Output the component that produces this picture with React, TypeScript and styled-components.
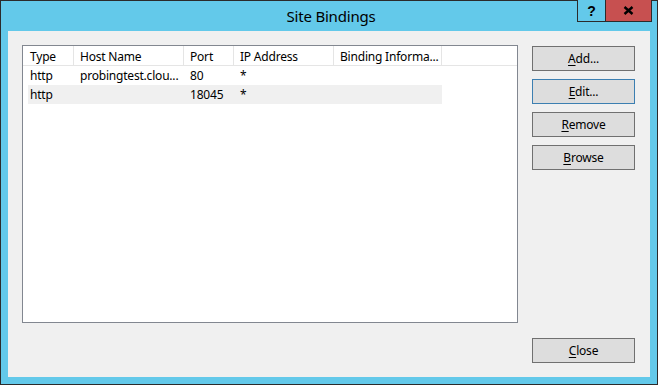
import React from "react";
import styled, { createGlobalStyle } from "styled-components";

const GlobalStyle = createGlobalStyle`
  html, body {
    margin: 0;
    padding: 0;
    background: #ffffff;
  }
  body {
    font-family: "Noto Sans", "Open Sans", sans-serif;
    font-size: 12px;
    letter-spacing: -0.2px;
    color: #000;
  }
`;

const Window = styled.div`
  width: 658px;
  height: 385px;
  box-sizing: border-box;
  border: 1px solid #2b2b2b;
  background: #63c9ea;
  display: flex;
  flex-direction: column;
  padding: 0 7px 7px 7px;
`;

const TitleBar = styled.div`
  height: 30px;
  display: grid;
  grid-template-columns: 1fr auto 1fr;
  align-items: start;
  margin: 0 -2px 0 0;
`;

const Title = styled.div`
  grid-column: 2;
  font-size: 15px;
  line-height: 30px;
  color: #000;
  margin-left: 2px;
`;

const CaptionButtons = styled.div`
  grid-column: 3;
  justify-self: end;
  display: flex;
  margin-top: -1px;
`;

const CaptionButton = styled.div<{ $close?: boolean }>`
  width: ${({ $close }) => ($close ? "47px" : "28px")};
  height: 22px;
  box-sizing: border-box;
  border: 1px solid #2b2b2b;
  border-top: none;
  border-right: ${({ $close }) => ($close ? "1px solid #2b2b2b" : "none")};
  background: ${({ $close }) => ($close ? "#c75050" : "#63c9ea")};
  display: flex;
  align-items: center;
  justify-content: center;
  font-family: "Liberation Sans", Arial, sans-serif;
  font-weight: bold;
  font-size: 14px;
  color: #000;
`;

const Client = styled.div`
  flex: 1;
  background: #f0f0f0;
  display: grid;
  grid-template-columns: 496px 103px;
  column-gap: 14px;
  padding: 14px 15px 14px 14px;
  box-sizing: border-box;
`;

const ListView = styled.div`
  height: 278px;
  box-sizing: border-box;
  border: 1px solid #828790;
  background: #ffffff;
  display: flex;
  flex-direction: column;
`;

const Header = styled.div`
  display: flex;
  height: 20px;
  box-sizing: border-box;
  border-bottom: 1px solid #e5e5e5;
`;

const HeaderCell = styled.div<{ $w: number; $pad?: number }>`
  width: ${({ $w }) => $w}px;
  box-sizing: border-box;
  border-right: 1px solid #e5e5e5;
  padding: 1px 0 0 ${({ $pad }) => $pad ?? 6}px;
  line-height: 19px;
  white-space: nowrap;
  overflow: hidden;
`;

const Row = styled.div<{ $shaded?: boolean }>`
  display: flex;
  height: 19px;
  margin-left: 5px;
  width: 414px;
  background: ${({ $shaded }) => ($shaded ? "#f0f0f0" : "transparent")};
`;

const Cell = styled.div<{ $w: number; $pad?: number }>`
  width: ${({ $w }) => $w}px;
  box-sizing: border-box;
  padding-left: ${({ $pad }) => $pad ?? 6}px;
  line-height: 20px;
  white-space: nowrap;
  overflow: hidden;
`;

const ButtonColumn = styled.div`
  display: flex;
  flex-direction: column;
  gap: 8px;
  padding-top: 1px;
`;

const Spacer = styled.div`
  flex: 1;
`;

const Button = styled.div<{ $focused?: boolean }>`
  height: 25px;
  box-sizing: border-box;
  border: 1px solid ${({ $focused }) => ($focused ? "#3c7fb1" : "#707070")};
  background: #dddddd;
  display: flex;
  align-items: center;
  justify-content: center;
  color: #000;

  u {
    text-decoration: underline;
    text-underline-offset: 2px;
  }
`;

const columns = [
  { label: "Type", w: 51, pad: 7 },
  { label: "Host Name", w: 110 },
  { label: "Port", w: 50 },
  { label: "IP Address", w: 100 },
  { label: "Binding Informa...", w: 108 },
];

const rowWidths = [46, 110, 50, 100, 108];

const bindings = [
  ["http", "probingtest.clou...", "80", "*", ""],
  ["http", "", "18045", "*", ""],
];

const CloseGlyph = () => (
  <svg width="11" height="9" viewBox="0 0 11 9">
    <path d="M1.5 1 L9.5 8 M9.5 1 L1.5 8" stroke="#000" strokeWidth="2.4" />
  </svg>
);

export default function App() {
  return (
    <>
      <GlobalStyle />
      <Window>
        <TitleBar>
          <Title>Site Bindings</Title>
          <CaptionButtons>
            <CaptionButton>?</CaptionButton>
            <CaptionButton $close>
              <CloseGlyph />
            </CaptionButton>
          </CaptionButtons>
        </TitleBar>
        <Client>
          <ListView>
            <Header>
              {columns.map((c) => (
                <HeaderCell key={c.label} $w={c.w} $pad={c.pad}>
                  {c.label}
                </HeaderCell>
              ))}
            </Header>
            {bindings.map((row, i) => (
              <Row key={i} $shaded={i === 1}>
                {row.map((v, j) => (
                  <Cell key={j} $w={rowWidths[j]} $pad={j === 0 ? 2 : 6}>
                    {v}
                  </Cell>
                ))}
              </Row>
            ))}
          </ListView>
          <ButtonColumn>
            <Button>
              <span>
                <u>A</u>dd...
              </span>
            </Button>
            <Button $focused>
              <span>
                <u>E</u>dit...
              </span>
            </Button>
            <Button>
              <span>
                <u>R</u>emove
              </span>
            </Button>
            <Button>
              <span>
                <u>B</u>rowse
              </span>
            </Button>
            <Spacer />
            <Button>
              <span>
                <u>C</u>lose
              </span>
            </Button>
          </ButtonColumn>
        </Client>
      </Window>
    </>
  );
}
